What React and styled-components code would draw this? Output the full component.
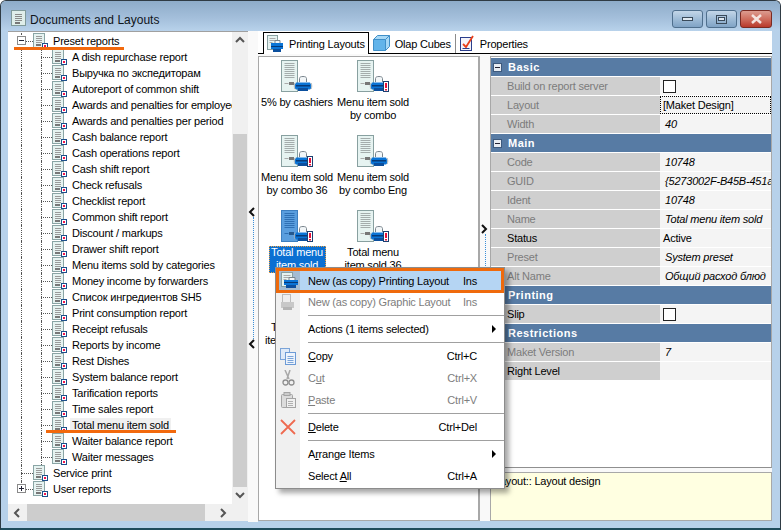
import styled, { createGlobalStyle, css } from "styled-components";

const GlobalStyle = createGlobalStyle`
  html, body { margin: 0; padding: 0; background: #fff; }
  body { font-family: "Liberation Sans", Arial, sans-serif; font-size: 11px; letter-spacing: -0.2px; color: #000; }
  * { box-sizing: border-box; }
`;

const Win = styled.div`
  position: relative;
  width: 781px;
  height: 530px;
  overflow: hidden;
  display: flex;
  flex-direction: column;
  border-radius: 6px 6px 0 0;
  border: 1px solid #2f3b44;
  border-bottom: 2px solid #1f4c5c;
  background: #b7d1ea;
`;

const TitleBar = styled.div`
  height: 30px;
  flex: none;
  display: flex;
  align-items: flex-start;
  padding: 9px 8px 0 10px;
  background: linear-gradient(#8eacc9, #a5c0dc 60%, #b8d2eb);
`;

const TitleText = styled.span`
  margin-left: 3px;
  font-size: 12px;
  letter-spacing: 0;
  line-height: 20px;
  color: #10151a;
  flex: 1;
`;

const WinButtons = styled.div`
  display: flex;
  gap: 3px;
`;

const WinButton = styled.div`
  width: ${({ $close }) => ($close ? 32 : 31)}px;
  height: 18px;
  border-radius: 3px;
  border: 1px solid ${({ $close }) => ($close ? "#7a2b22" : "#4f6f8d")};
  display: flex;
  align-items: center;
  justify-content: center;
  background: ${({ $close }) =>
    $close ? "linear-gradient(#dc9c90, #cf6e5e 50%, #b8392a)" : "linear-gradient(#c3d6e8, #9fbcd7 50%, #80a3c5)"};
`;

const Body = styled.div`
  flex: 1;
  display: flex;
  min-height: 0;
  padding: 0 8px 6px 7px;
`;

const TreePane = styled.div`
  width: 240px;
  flex: none;
  display: flex;
  flex-direction: column;
  background: #f0f0f0;
  border-top: 1px solid #a0a0a0;
  height: 490px;
`;

const TreeMain = styled.div`
  flex: 1;
  display: flex;
  min-height: 0;
`;

const TreeList = styled.div`
  flex: 1;
  background: #fff;
  overflow: hidden;
  padding-top: 1px;
  min-width: 0;
`;

const TreeRow = styled.div`
  height: 16px;
  display: flex;
  align-items: center;
  white-space: nowrap;
`;

const Guide = styled.span`
  position: relative;
  flex: none;
  width: ${({ $w }) => $w}px;
  height: 16px;
  ${({ $vert }) =>
    $vert &&
    css`
      &::before {
        content: "";
        position: absolute;
        left: ${({ $x }) => $x}px;
        top: 0;
        height: ${({ $half }) => ($half ? "8px" : "16px")};
        border-left: 1px dotted #555;
      }
    `}
  ${({ $horiz }) =>
    $horiz &&
    css`
      &::after {
        content: "";
        position: absolute;
        left: ${({ $x }) => $x}px;
        right: 0;
        top: 8px;
        border-top: 1px dotted #555;
      }
    `}
`;

const Expander = styled.span`
  position: absolute;
  left: 5px;
  top: 3px;
  width: 9px;
  height: 9px;
  background: #fff;
  border: 1px solid #8a8a8a;
  z-index: 1;
  &::before {
    content: "";
    position: absolute;
    left: 1px;
    top: 3px;
    width: 5px;
    height: 1px;
    background: #223;
  }
  ${({ $plus }) =>
    $plus &&
    css`
      &::after {
        content: "";
        position: absolute;
        left: 3px;
        top: 1px;
        width: 1px;
        height: 5px;
        background: #223;
      }
    `}
`;

const TreeLabel = styled.span`
  margin-left: 3px;
  padding: 0 2px;
  line-height: 15px;
  background: ${({ $current }) => ($current ? "#f0f0f0" : "transparent")};
`;

const VScroll = styled.div`
  width: 16px;
  flex: none;
  display: flex;
  flex-direction: column;
  background: #f0f0f0;
`;

const HScroll = styled.div`
  height: 17px;
  flex: none;
  display: flex;
  background: #f0f0f0;
`;

const ScrollBtn = styled.div`
  flex: none;
  width: ${({ $horizontal }) => ($horizontal ? "19px" : "16px")};
  height: 17px;
  display: flex;
  align-items: center;
  justify-content: center;
`;

const ScrollTrack = styled.div`
  flex: 1;
  display: flex;
  flex-direction: column;
  min-height: 0;
`;

const ScrollSpacer = styled.div`
  flex: none;
  height: ${({ $h }) => ($h ? `${$h}px` : "auto")};
  width: ${({ $w }) => ($w ? `${$w}px` : "auto")};
`;

const VThumb = styled.div`
  flex: 1;
  margin: 0 1px;
  background: #cdcdcd;
`;

const HThumb = styled.div`
  width: 178px;
  background: #cdcdcd;
`;

const Splitter = styled.div`
  width: 10px;
  flex: none;
  display: flex;
  flex-direction: column;
  align-items: center;
  background: #f9f9f9;
`;

const SplitDots = styled.div`
  flex: ${({ $h }) => ($h ? "none" : 1)};
  height: ${({ $h }) => ($h ? `${$h}px` : "auto")};
  border-left: 1px dotted #3b8fd8;
`;

const SplitArrow = styled.div`
  height: 10px;
  display: flex;
  align-items: center;
  justify-content: center;
  flex: none;
`;

const Right = styled.div`
  flex: 1;
  display: flex;
  flex-direction: column;
  min-width: 0;
  height: 490px;
`;

const TabStrip = styled.div`
  height: 23px;
  flex: none;
  display: flex;
  align-items: flex-end;
  padding-left: 5px;
  background: #fff;
  border-bottom: 1px solid #000;
`;

const Tab = styled.div`
  height: 19px;
  display: flex;
  align-items: center;
  gap: 5px;
  padding: 0 4px;
  white-space: nowrap;
  ${({ $active }) =>
    $active &&
    css`
      border: 1px solid #000;
      border-bottom: none;
      margin-bottom: -1px;
      height: 22px;
      padding: 0 3px;
      background: #fff;
    `}
  ${({ $divider }) =>
    $divider &&
    css`
      border-right: 1px solid #8c8c8c;
    `}
`;

const Panes = styled.div`
  flex: 1;
  display: flex;
  min-height: 0;
  padding-top: 2px;
  background: #f9f9f9;
`;

const LayoutList = styled.div`
  width: 222px;
  flex: none;
  overflow: hidden;
  background: #fff;
  border: 1px solid #a8a8a8;
  border-right-width: 2px;
  display: grid;
  grid-template-columns: repeat(2, 76px);
  grid-auto-rows: 75px;
  padding-top: 3px;
  align-content: start;
`;

const LayoutCell = styled.div`
  display: flex;
  flex-direction: column;
  align-items: center;
  text-align: center;
  line-height: 13px;
`;

const LayoutLabel = styled.div`
  margin-top: 3px;
  width: ${({ $wide }) => ($wide ? "80px" : "57px")};
  flex: none;
  ${({ $wide }) => $wide && "white-space: pre-line;"}
  ${({ $selected }) =>
    $selected &&
    css`
      color: #fff;
      background: #0a6fd2;
      outline: 1px dotted #f0a040;
      outline-offset: -1px;
      height: 27px;
      overflow: hidden;
    `}
`;

const PropsColumn = styled.div`
  flex: 1;
  display: flex;
  flex-direction: column;
  min-width: 0;
`;

const PropsGrid = styled.div`
  flex: 1;
  background: #fff;
  border: 1px solid #a8a8a8;
  border-bottom: 1px solid #8f8f8f;
  padding-top: 1px;
  min-height: 0;
  overflow: hidden;
`;

const SectionHeader = styled.div`
  height: 19px;
  border-bottom: 1px solid #fff;
  background: #577ba4;
  color: #fff;
  font-weight: bold;
  letter-spacing: 0.5px;
  display: flex;
  align-items: center;
  gap: 6px;
  padding-left: 2px;
`;

const Collapse = styled.span`
  width: 9px;
  height: 9px;
  background: #e8edf3;
  border: 1px solid #3e5a7d;
  display: flex;
  align-items: center;
  justify-content: center;
  &::before {
    content: "";
    width: 5px;
    height: 1px;
    background: #223;
  }
`;

const PropRow = styled.div`
  height: 19px;
  display: grid;
  grid-template-columns: 169px 1fr;
  border-bottom: 1px solid #fff;
`;

const PropName = styled.div`
  background: #cfcfcf;
  color: ${({ $enabled }) => ($enabled ? "#000" : "#7c7c7c")};
  padding-left: 16px;
  display: flex;
  align-items: center;
`;

const PropValue = styled.div`
  background: #f4f4f4;
  padding-left: 3px;
  display: flex;
  align-items: center;
  white-space: nowrap;
  overflow: hidden;
  ${({ $italic }) => $italic && "font-style: italic; padding-left: 5px;"}
  ${({ $focus }) => $focus && "outline: 1px dotted #000; outline-offset: -1px;"}
`;

const CheckBox = styled.span`
  width: 13px;
  height: 13px;
  background: #fff;
  border: 1px solid #222;
`;

const Description = styled.div`
  height: 49px;
  flex: none;
  margin-top: 4px;
  background: #ffffe1;
  border: 1px solid #a8a8a8;
  padding: 2px 3px;
`;

const Menu = styled.div`
  position: absolute;
  left: 274px;
  top: 266px;
  width: 230px;
  height: 222px;
  background: #fff;
  border: 1px solid #8c8c8c;
  box-shadow: 4px 4px 5px rgba(0, 0, 0, 0.35);
  display: flex;
  flex-direction: column;
  z-index: 3;
  &::before {
    content: "";
    position: absolute;
    left: 0;
    top: 0;
    bottom: 0;
    width: 24px;
    background: #f0f0f0;
  }
`;

const MenuItem = styled.div`
  position: relative;
  height: 22px;
  flex: none;
  display: grid;
  grid-template-columns: 32px minmax(0, 1fr) 60px 27px;
  align-items: center;
  color: ${({ $disabled }) => ($disabled ? "#7d7d7d" : "#000")};
  white-space: nowrap;
  ${({ $active }) =>
    $active &&
    css`
      height: 25px;
      margin-bottom: -2px;
      z-index: 1;
      background: #b5d5f3;
      border: 3px solid #ef6a0c;
      grid-template-columns: 29px minmax(0, 1fr) 60px 24px;
    `}
`;

const MenuIcon = styled.span`
  display: flex;
  justify-content: center;
  width: 24px;
  ${({ $active }) =>
    $active &&
    css`
      width: 21px;
      background: #a4bcd2;
      height: 19px;
      align-items: center;
    `}
`;

const Shortcut = styled.span`
  justify-self: end;
  grid-column: 3;
`;

const Arrow = styled.span`
  grid-column: 4;
  margin-left: 15px;
  width: 0;
  height: 0;
  border-left: 4px solid #000;
  border-top: 4px solid transparent;
  border-bottom: 4px solid transparent;
`;

const MenuSep = styled.div`
  height: 3px;
  flex: none;
  margin: 0 0 2px 32px;
  border-bottom: 1px solid #a0a0a0;
  position: relative;
`;

const Mark = styled.span`
  text-decoration: underline;
`;

const Annotation = styled.div`
  position: absolute;
  left: ${({ $x }) => $x}px;
  top: ${({ $y }) => $y}px;
  width: ${({ $w }) => $w}px;
  height: 3px;
  background: #f2690d;
  z-index: 2;
`;

const IconSvg = styled.svg`
  flex: none;
  display: block;
`;

function SmallDoc() {
  return (
    <IconSvg width="15" height="16" viewBox="0 0 15 16">
      <rect x="0.500" y="0.500" width="11" height="14" fill="#e6f3f1" stroke="#8aa5a5" />
      <path d="M3 3.500h6M3 5.500h6M3 7.500h6M3 9.500h6" stroke="#9a9a9a" />
      <rect x="3" y="11" width="5" height="2" fill="#777" />
      <rect x="9.500" y="10.500" width="5" height="5" fill="#fff" stroke="#1c4e8a" />
      <rect x="11" y="12" width="2" height="2" fill="#f0144a" />
    </IconSvg>
  );
}

function Printer({ x, y }) {
  return (
    <g transform={`translate(${x} ${y})`}>
      <path d="M4.500 6V2.500C4.500 1 6 .5 8 .5s3.500.5 3.500 2V6" fill="#f2f6f8" stroke="#78848c" />
      <path d="M1 6.500h14l1 2v4l-1 1H1l-1-1v-4z" fill="#0a74d6" />
      <rect x="1" y="9" width="14" height="1.500" fill="#063a78" />
      <rect x="3" y="12" width="10" height="3" fill="#0b4f9e" />
      <path d="M0 7c-1 2-1 4 0 6M16 7c1 2 1 4 0 6" stroke="#a8b0b6" fill="none" />
    </g>
  );
}

function LargeDoc({ badge, selected }) {
  return (
    <IconSvg width="32" height="33" viewBox="0 0 32 33">
      <rect x="0.500" y="0.500" width="16" height="31" fill={selected ? "#5a9ede" : "#e6f3f1"} stroke={selected ? "#3d7fc0" : "#88a0a0"} />
      <path
        d="M3.500 3.500h10M3.500 5.500h10M3.500 7.500h10M3.500 9.500h10M3.500 11.500h10M3.500 13.500h10M3.500 15.500h10M3.500 17.500h10"
        stroke={selected ? "#2f70b4" : "#a4acac"}
      />
      <rect x="8" y="22" width="5" height="3" fill={selected ? "#24588f" : "#777"} />
      <path d="M3.500 23.500h4" stroke={selected ? "#2f70b4" : "#aaa"} />
      <Printer x={14} y={16} />
      {badge && (
        <g>
          <rect x="26.500" y="21.500" width="5" height="10" fill="#fff" stroke="#1c3f70" />
          <rect x="28" y="23" width="2" height="5" fill="#e8103a" />
          <rect x="28" y="29" width="2" height="1.500" fill="#e8103a" />
        </g>
      )}
    </IconSvg>
  );
}

function TitleIcon() {
  return (
    <IconSvg width="16" height="17" viewBox="0 0 16 17">
      <rect x="0.500" y="0.500" width="14" height="15" fill="#dfeeea" stroke="#809a9a" />
      <path d="M4 4.500h7M4 6.500h7M4 8.500h7M4 10.500h7" stroke="#8a8a8a" />
      <rect x="4" y="12" width="5" height="2" fill="#777" />
    </IconSvg>
  );
}

function TabPrinterIcon() {
  return (
    <IconSvg width="17" height="18" viewBox="0 0 17 18">
      <rect x="0.500" y="0.500" width="10" height="14" fill="#e6f3f1" stroke="#88a0a0" />
      <path d="M2.500 3.500h6M2.500 5.500h6M2.500 7.500h3" stroke="#aaa" />
      <g transform="translate(1 2)">
        <path d="M7 6V3.500h5V6" fill="#f2f6f8" stroke="#78848c" />
        <rect x="3" y="6" width="12" height="6" fill="#0a74d6" />
        <rect x="3" y="9" width="12" height="1" fill="#063a78" />
        <rect x="5" y="12" width="8" height="3" fill="#0b4f9e" />
      </g>
    </IconSvg>
  );
}

function CubeIcon() {
  return (
    <IconSvg width="17" height="17" viewBox="0 0 17 17">
      <path d="M.5 4.500l4-4h12v11l-4 4H.5z" fill="#a6d8f6" stroke="#3f8fc8" />
      <rect x="1" y="5" width="11" height="10" fill="#62b4ea" />
      <path d="M.5 4.500h12v11M12.500 4.500l4-4" fill="none" stroke="#3f8fc8" />
    </IconSvg>
  );
}

function CheckListIcon() {
  return (
    <IconSvg width="15" height="17" viewBox="0 0 15 17">
      <rect x="0.500" y="2.500" width="11" height="13" fill="#f4f4fa" stroke="#2c3f8c" />
      <path d="M3 9l3 3 7-11" fill="none" stroke="#e8401c" strokeWidth="1.800" />
      <path d="M2.500 13.500h7" stroke="#2c3f8c" />
    </IconSvg>
  );
}

function MenuPrinter({ disabled }) {
  return (
    <IconSvg width="18" height="18" viewBox="0 0 18 18">
      {disabled ? (
        <g>
          <rect x="3.500" y="1.500" width="8" height="8" fill="#eee" stroke="#bbb" />
          <rect x="2" y="9" width="13" height="6" fill="#c8c8c8" />
          <rect x="4" y="14" width="9" height="3" fill="#b4b4b4" />
        </g>
      ) : (
        <g>
          <rect x="0.500" y="0.500" width="11" height="14" fill="#e6f3f1" stroke="#88a0a0" />
          <path d="M2.500 3.500h7M2.500 5.500h7M2.500 7.500h3" stroke="#aaa" />
          <path d="M8 8V5.500h6V8" fill="#f2f6f8" stroke="#78848c" />
          <rect x="3" y="8" width="14" height="5" fill="#0a74d6" />
          <rect x="3" y="10" width="14" height="1" fill="#063a78" />
          <rect x="5" y="13" width="10" height="3" fill="#0b4f9e" />
        </g>
      )}
    </IconSvg>
  );
}

function CopyIcon() {
  return (
    <IconSvg width="16" height="17" viewBox="0 0 16 17">
      <rect x="0.500" y="0.500" width="9" height="11" fill="#dfeaf8" stroke="#7ba4d8" />
      <rect x="5.500" y="4.500" width="10" height="12" fill="#eef4fc" stroke="#6d9bd6" />
      <path d="M7.500 8.500h6M7.500 10.500h6M7.500 12.500h6M7.500 14.500h6" stroke="#7ba4d8" />
    </IconSvg>
  );
}

function CutIcon() {
  return (
    <IconSvg width="13" height="16" viewBox="0 0 13 16">
      <path d="M3 0l4 9M8 0L5 9" stroke="#a8a8a8" strokeWidth="1.500" fill="none" />
      <circle cx="3.500" cy="12.500" r="2.500" fill="none" stroke="#8e8e8e" strokeWidth="1.300" />
      <circle cx="9.500" cy="12.500" r="2.500" fill="none" stroke="#8e8e8e" strokeWidth="1.300" />
    </IconSvg>
  );
}

function PasteIcon() {
  return (
    <IconSvg width="15" height="16" viewBox="0 0 15 16">
      <rect x="0.500" y="2.500" width="11" height="13" rx="1" fill="#dcdcdc" stroke="#a4a4a4" />
      <rect x="3" y="0.500" width="6" height="3" fill="#ccc" stroke="#a4a4a4" />
      <rect x="5.500" y="6.500" width="9" height="9" fill="#f0f0f0" stroke="#a4a4a4" />
      <path d="M7 9.500h5M7 11.500h5M7 13.500h5" stroke="#b0b0b0" />
    </IconSvg>
  );
}

function DeleteIcon() {
  return (
    <IconSvg width="16" height="16" viewBox="0 0 16 16">
      <path d="M1 1l14 14M15 1L1 15" stroke="#ee6a50" strokeWidth="1.800" />
    </IconSvg>
  );
}

function Chevron({ dir, color = "#555" }) {
  const paths = {
    up: "M1 6l4-4 4 4",
    down: "M1 2l4 4 4-4",
    left: "M6 1L2 5l4 4",
    right: "M2 1l4 4-4 4",
  };
  return (
    <IconSvg width="10" height="10" viewBox="0 0 10 10">
      <path d={paths[dir]} fill="none" stroke={color} strokeWidth="2" />
    </IconSvg>
  );
}

const reports = [
  "A dish repurchase report",
  "Выручка по экспедиторам",
  "Autoreport of common shift",
  "Awards and penalties for employees",
  "Awards and penalties per period",
  "Cash balance report",
  "Cash operations report",
  "Cash shift report",
  "Check refusals",
  "Checklist report",
  "Common shift report",
  "Discount / markups",
  "Drawer shift report",
  "Menu items sold by categories",
  "Money income by forwarders",
  "Список ингредиентов SH5",
  "Print consumption report",
  "Receipt refusals",
  "Reports by income",
  "Rest Dishes",
  "System balance report",
  "Tarification reports",
  "Time sales report",
  "Total menu item sold",
  "Waiter balance report",
  "Waiter messages",
];

const layouts = [
  { label: "5% by cashiers", wide: true },
  { label: "Menu item sold\nby combo", wide: true, badge: true },
  { label: "Menu item sold\nby combo 36", wide: true, badge: true },
  { label: "Menu item sold\nby combo Eng", wide: true },
  { label: "Total menu item sold", badge: true, selected: true },
  { label: "Total menu item sold 36", badge: true },
  { label: "Total menu\nitem sold Eng", wide: true, badge: true },
];

const sections = [
  {
    title: "Basic",
    rows: [
      { name: "Build on report server", check: true },
      { name: "Layout", value: "[Maket Design]", focus: true },
      { name: "Width", value: "40", italic: true },
    ],
  },
  {
    title: "Main",
    rows: [
      { name: "Code", value: "10748", italic: true },
      { name: "GUID", value: "{5273002F-B45B-451a-8C11-7E2D", italic: true },
      { name: "Ident", value: "10748", italic: true },
      { name: "Name", value: "Total menu item sold", italic: true },
      { name: "Status", value: "Active", enabled: true },
      { name: "Preset", value: "System preset", italic: true },
      { name: "Alt Name", value: "Общий расход блюд", italic: true },
    ],
  },
  { title: "Printing", rows: [{ name: "Slip", check: true, enabled: true }] },
  {
    title: "Restrictions",
    rows: [
      { name: "Maket Version", value: "7", italic: true },
      { name: "Right Level", value: "", enabled: true },
    ],
  },
];

function App() {
  return (
    <Win>
      <GlobalStyle />
      <TitleBar>
        <TitleIcon />
        <TitleText>Documents and Layouts</TitleText>
        <WinButtons>
          <WinButton>
            <svg width="11" height="6" viewBox="0 0 11 6">
              <rect x="0.500" y="1.500" width="10" height="3" fill="#dfe8f0" stroke="#3a4a5a" />
            </svg>
          </WinButton>
          <WinButton>
            <svg width="11" height="9" viewBox="0 0 11 9">
              <rect x="0.500" y="0.500" width="10" height="8" fill="none" stroke="#3a4a5a" />
              <rect x="2.500" y="2.500" width="6" height="3" fill="#dfe8f0" stroke="#3a4a5a" />
            </svg>
          </WinButton>
          <WinButton $close>
            <svg width="13" height="10" viewBox="0 0 13 10">
              <path d="M2 1l9 8M11 1L2 9" stroke="#f4e4e0" strokeWidth="2.500" />
            </svg>
          </WinButton>
        </WinButtons>
      </TitleBar>

      <Body>
        <TreePane>
          <TreeMain>
            <TreeList>
              <TreeRow>
                <Guide $w={4} />
                <Guide $w={21} $vert $half $horiz $x={9}>
                  <Expander />
                </Guide>
                <SmallDoc />
                <TreeLabel>Preset reports</TreeLabel>
              </TreeRow>
              {reports.map((name) => (
                <TreeRow key={name}>
                  <Guide $w={4} />
                  <Guide $w={20} $vert $x={9} />
                  <Guide $w={20} $vert $horiz $x={9} />
                  <SmallDoc />
                  <TreeLabel $current={name === "Total menu item sold"}>{name}</TreeLabel>
                </TreeRow>
              ))}
              <TreeRow>
                <Guide $w={4} />
                <Guide $w={21} $vert $horiz $x={9} />
                <SmallDoc />
                <TreeLabel>Service print</TreeLabel>
              </TreeRow>
              <TreeRow>
                <Guide $w={4} />
                <Guide $w={21} $vert $half $horiz $x={9}>
                  <Expander $plus />
                </Guide>
                <SmallDoc />
                <TreeLabel>User reports</TreeLabel>
              </TreeRow>
            </TreeList>
            <VScroll>
              <ScrollBtn>
                <Chevron dir="up" />
              </ScrollBtn>
              <ScrollTrack>
                <ScrollSpacer $h={85} />
                <VThumb />
              </ScrollTrack>
              <ScrollBtn>
                <Chevron dir="down" />
              </ScrollBtn>
            </VScroll>
          </TreeMain>
          <HScroll>
            <ScrollBtn $horizontal>
              <Chevron dir="left" />
            </ScrollBtn>
            <HThumb />
            <ScrollSpacer $w={9} />
            <ScrollBtn $horizontal>
              <Chevron dir="right" />
            </ScrollBtn>
          </HScroll>
        </TreePane>

        <Splitter>
          <ScrollSpacer $h={176} />
          <SplitArrow>
            <Chevron dir="left" color="#111" />
          </SplitArrow>
          <SplitDots />
          <SplitArrow>
            <Chevron dir="left" color="#111" />
          </SplitArrow>
          <ScrollSpacer $h={173} />
        </Splitter>

        <Right>
          <TabStrip>
            <Tab $active>
              <TabPrinterIcon />
              Printing Layouts
            </Tab>
            <Tab $divider>
              <CubeIcon />
              Olap Cubes
            </Tab>
            <Tab>
              <CheckListIcon />
              Properties
            </Tab>
          </TabStrip>
          <Panes>
            <LayoutList>
              {layouts.map((item, i) => (
                <LayoutCell key={i}>
                  <LargeDoc badge={item.badge} selected={item.selected} />
                  <LayoutLabel $wide={item.wide} $selected={item.selected}>
                    {item.label}
                  </LayoutLabel>
                </LayoutCell>
              ))}
            </LayoutList>
            <Splitter>
              <ScrollSpacer $h={168} />
              <SplitArrow>
                <Chevron dir="right" color="#111" />
              </SplitArrow>
              <SplitDots $h={200} />
            </Splitter>
            <PropsColumn>
              <PropsGrid>
                {sections.map((section) => (
                  <div key={section.title}>
                    <SectionHeader>
                      <Collapse />
                      {section.title}
                    </SectionHeader>
                    {section.rows.map((row) => (
                      <PropRow key={row.name}>
                        <PropName $enabled={row.enabled}>{row.name}</PropName>
                        <PropValue $italic={row.italic} $focus={row.focus}>
                          {row.check ? <CheckBox /> : row.value}
                        </PropValue>
                      </PropRow>
                    ))}
                  </div>
                ))}
              </PropsGrid>
              <Description>Layout:: Layout design</Description>
            </PropsColumn>
          </Panes>
        </Right>
      </Body>

      <Menu>
        <MenuItem $active>
          <MenuIcon $active>
            <MenuPrinter />
          </MenuIcon>
          <span>New (as copy) Printing Layout</span>
          <Shortcut>Ins</Shortcut>
        </MenuItem>
        <MenuItem $disabled>
          <MenuIcon>
            <MenuPrinter disabled />
          </MenuIcon>
          <span>New (as copy) Graphic Layout</span>
          <Shortcut>Ins</Shortcut>
        </MenuItem>
        <MenuSep />
        <MenuItem>
          <MenuIcon />
          <span>Actions (1 items selected)</span>
          <Arrow />
        </MenuItem>
        <MenuSep />
        <MenuItem>
          <MenuIcon>
            <CopyIcon />
          </MenuIcon>
          <span>
            <Mark>C</Mark>opy
          </span>
          <Shortcut>Ctrl+C</Shortcut>
        </MenuItem>
        <MenuItem $disabled>
          <MenuIcon>
            <CutIcon />
          </MenuIcon>
          <span>
            C<Mark>u</Mark>t
          </span>
          <Shortcut>Ctrl+X</Shortcut>
        </MenuItem>
        <MenuItem $disabled>
          <MenuIcon>
            <PasteIcon />
          </MenuIcon>
          <span>
            <Mark>P</Mark>aste
          </span>
          <Shortcut>Ctrl+V</Shortcut>
        </MenuItem>
        <MenuSep />
        <MenuItem>
          <MenuIcon>
            <DeleteIcon />
          </MenuIcon>
          <span>
            <Mark>D</Mark>elete
          </span>
          <Shortcut>Ctrl+Del</Shortcut>
        </MenuItem>
        <MenuSep />
        <MenuItem>
          <MenuIcon />
          <span>
            A<Mark>r</Mark>range Items
          </span>
          <Arrow />
        </MenuItem>
        <MenuItem>
          <MenuIcon />
          <span>
            Select <Mark>A</Mark>ll
          </span>
          <Shortcut>Ctrl+A</Shortcut>
        </MenuItem>
      </Menu>

      <Annotation $x={13} $y={46} $w={110} />
      <Annotation $x={45} $y={429} $w={130} />
    </Win>
  );
}

export default App;
